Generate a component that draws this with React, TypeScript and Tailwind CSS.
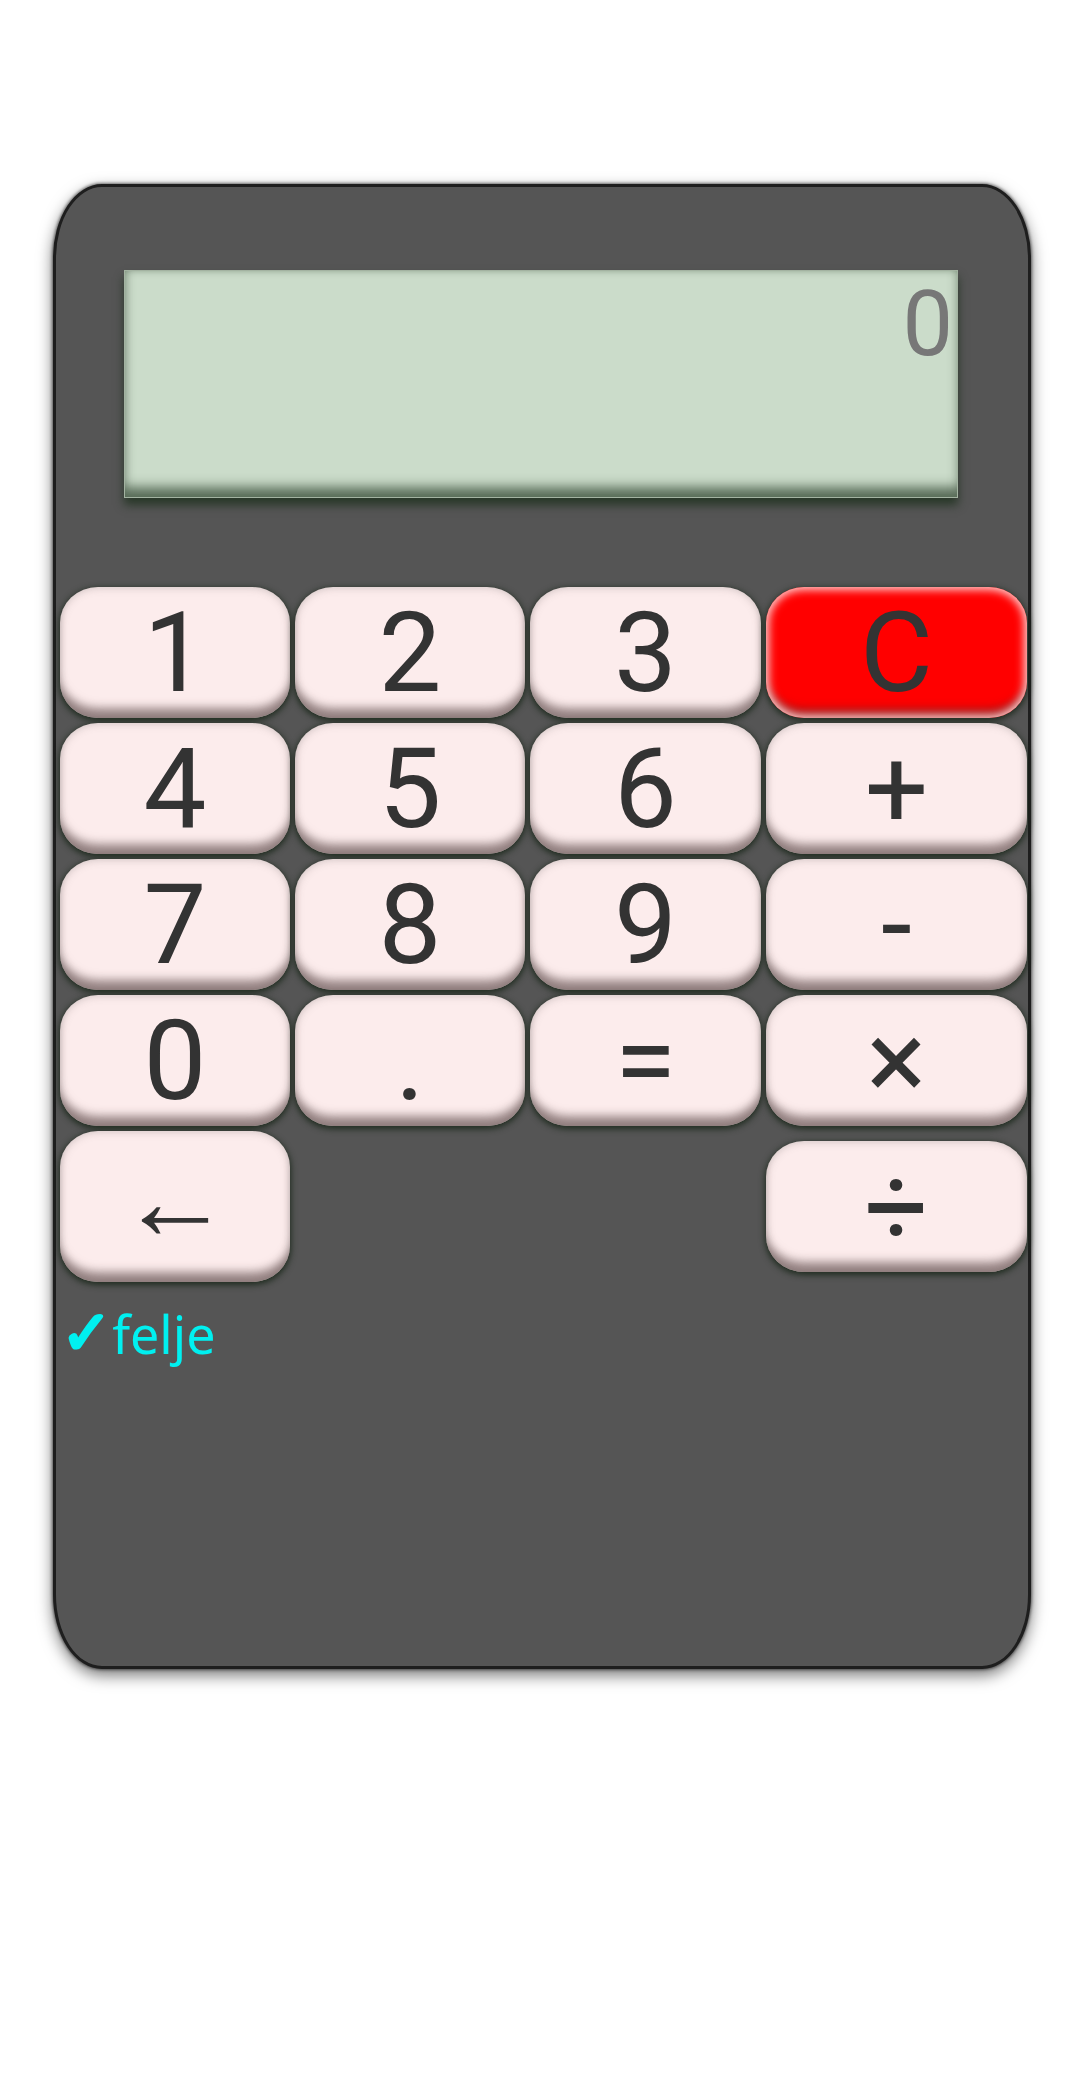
import React from "react";

const keyBase =
  "flex items-center justify-center rounded-[38px/36px] text-[#333333] text-[112px] leading-none font-['Roboto',sans-serif] select-none";
const keyNormal =
  "bg-[#fcecec] shadow-[inset_0_-14px_10px_-4px_rgba(100,80,80,0.65),inset_0_0_9px_rgba(110,100,100,0.35),0_2px_6px_1px_rgba(22,36,22,0.85)]";
const keyRed =
  "bg-[#ff0000] shadow-[inset_0_0_9px_3px_rgba(255,205,205,1),inset_0_-13px_10px_-4px_rgba(90,40,40,0.6),0_2px_6px_1px_rgba(22,36,22,0.85)]";

function Key({ label, red, className = "" }: { label: string; red?: boolean; className?: string }) {
  return <div className={`${keyBase} ${red ? keyRed : keyNormal} ${className}`}>{label}</div>;
}

export default function App() {
  const rows: { label: string; red?: boolean }[][] = [
    [{ label: "1" }, { label: "2" }, { label: "3" }, { label: "C", red: true }],
    [{ label: "4" }, { label: "5" }, { label: "6" }, { label: "+" }],
    [{ label: "7" }, { label: "8" }, { label: "9" }, { label: "-" }],
    [{ label: "0" }, { label: "." }, { label: "=" }, { label: "×" }],
  ];
  return (
    <div className="min-h-[2075px] w-[1080px] bg-white pt-[184px]">
      <div className="ml-[53px] flex h-[1485px] w-[978px] flex-col rounded-[5%] border-[3px] border-[#1e1e1e] bg-[#555555] shadow-[0_0_3px_1px_rgba(0,0,0,0.5),0_6px_16px_rgba(0,0,0,0.55)]">
        <div className="ml-[68px] mt-[83px] flex h-[228px] w-[834px] items-start justify-end border border-[#a3b3a1] bg-[#cbdcca] pr-[4px] pt-[9px] shadow-[inset_9px_0_9px_-7px_rgba(90,110,90,0.55),inset_-8px_0_8px_-7px_rgba(90,110,90,0.45),inset_0_7px_7px_-7px_rgba(90,110,90,0.45),inset_0_-18px_12px_-8px_rgba(70,90,70,0.85),0_7px_9px_rgba(25,45,25,0.75)]">
          <span className="font-['Roboto',sans-serif] text-[90px] leading-none text-[#777777]">0</span>
        </div>
        <div className="ml-[4px] mt-[89px] grid grid-cols-[230px_230px_231px_261px] gap-[5px]">
          {rows.map((row, ri) =>
            row.map((k, ci) => (
              <Key key={`${ri}-${ci}`} label={k.label} red={k.red} className="h-[131px]" />
            ))
          )}
          <Key label="←" className="h-[151px] pb-[12px]" />
          <div />
          <div />
          <Key label="÷" className="h-[131px] self-center" />
        </div>
        <div className="ml-[5px] mt-[5px] flex items-baseline text-[52px] text-[#00f0f0] font-['Noto_Sans',sans-serif]">
          <span className="font-['DejaVu_Sans',sans-serif] text-[61px] font-bold [-webkit-text-stroke:3px_#00f0f0]">✓</span>
          <span>felje</span>
        </div>
      </div>
    </div>
  );
}
